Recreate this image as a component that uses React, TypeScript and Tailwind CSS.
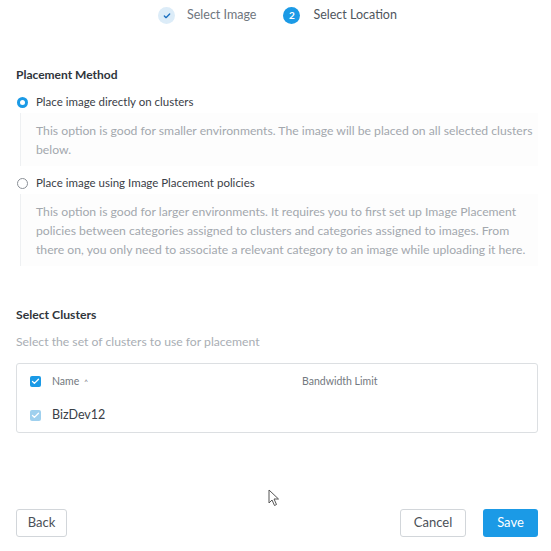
import { Check } from 'lucide-react';

function Radio({ checked }: { checked: boolean }) {
  return checked ? (
    <span className="w-[11px] h-[11px] rounded-full bg-[#1b9ae6] flex items-center justify-center shrink-0">
      <span className="w-[5px] h-[5px] rounded-full bg-white" />
    </span>
  ) : (
    <span className="w-[11px] h-[11px] rounded-full border border-[#8a8f96] bg-white shrink-0" />
  );
}

function Box({ faded }: { faded?: boolean }) {
  return (
    <span
      className={`w-[11px] h-[11px] rounded-[2px] flex items-center justify-center shrink-0 ${
        faded ? 'bg-[#9fd0ee]' : 'bg-[#1b9ae6]'
      }`}
    >
      <Check className="w-[9px] h-[9px] text-white" strokeWidth={3.5} />
    </span>
  );
}

export default function App() {
  return (
    <div className="w-[551px] h-[551px] bg-white text-[#333a42] flex flex-col relative" style={{ fontFamily: 'Lato, "Open Sans", sans-serif' }}>
      {/* stepper */}
      <div className="h-[31px] flex items-center pl-[158px] text-[12.5px]">
        <span className="w-[17px] h-[17px] rounded-full bg-[#dcecf8] flex items-center justify-center">
          <Check className="w-[8px] h-[8px] text-[#1b6fc0]" strokeWidth={4} />
        </span>
        <span className="ml-[12px] text-[#6f767e]">Select Image</span>
        <span className="ml-[27px] w-[17px] h-[17px] rounded-full bg-[#1b9ae6] text-white text-[10px] font-bold flex items-center justify-center">
          2
        </span>
        <span className="ml-[13px] text-[#4f565e]">Select Location</span>
      </div>

      <div className="pl-4 pr-[13px] pt-[36px]">
        <h2 className="text-[12px] font-bold text-[#2f353b] leading-[16px]">Placement Method</h2>

        <div className="mt-[11px] flex items-center gap-[8px] pl-[1px] h-[16px]">
          <Radio checked />
          <span className="text-[11.5px] text-[#3a4047]">Place image directly on clusters</span>
        </div>
        <div className="mt-[3px] ml-[4px] border-l border-[#eef0f2] bg-[#fdfdfd] pl-[15px] pt-[8px] pb-[7px] text-[12.2px] leading-[19px] text-[#a3a8ae]">
          This option is good for smaller environments. The image will be placed on all selected clusters below.
        </div>

        <div className="mt-[9px] flex items-center gap-[8px] pl-[1px] h-[16px]">
          <Radio checked={false} />
          <span className="text-[11.5px] text-[#3a4047]">Place image using Image Placement policies</span>
        </div>
        <div className="mt-[3px] ml-[4px] border-l border-[#eef0f2] bg-[#fdfdfd] pl-[15px] pt-[8px] pb-[7px] text-[12.2px] leading-[19px] text-[#a3a8ae]">
          This option is good for larger environments. It requires you to first set up Image Placement policies between categories assigned to clusters and categories assigned to images. From there on, you only need to associate a relevant category to an image while uploading it here.
        </div>

        <h2 className="mt-[41px] text-[12.2px] font-bold text-[#2f353b] leading-[16px]">Select Clusters</h2>
        <p className="mt-[11px] text-[12.2px] text-[#a9aeb4] leading-[16px]">Select the set of clusters to use for placement</p>

        <div className="mt-[13px] border border-[#dcdfe2] rounded-[3px]">
          <div className="h-[35px] flex items-center pl-[13px] text-[10.5px] text-[#737980]">
            <Box />
            <span className="ml-[11px]">Name</span>
            <span className="ml-[5px] text-[8px]">˄</span>
            <span className="ml-[214px]">Bandwidth Limit</span>
          </div>
          <div className="h-[33px] flex items-center pl-[13px] text-[12.5px] text-[#3a4047]">
            <Box faded />
            <span className="ml-[11px]">BizDev12</span>
          </div>
        </div>
      </div>

      <div className="mt-auto mb-[14px] pl-4 pr-[13px] flex items-center">
        <button className="h-[28px] w-[51px] border border-[#d2d6da] rounded-[3px] text-[13px] text-[#4a5057] bg-white">Back</button>
        <button className="ml-auto h-[28px] w-[66px] border border-[#d2d6da] rounded-[3px] text-[13px] text-[#4a5057] bg-white">Cancel</button>
        <button className="ml-[17px] h-[28px] w-[55px] rounded-[3px] text-[13px] text-white bg-[#1b9ae6]">Save</button>
      </div>

      <svg className="absolute left-[268px] top-[489px]" width="12" height="18" viewBox="0 0 12 18">
        <path d="M1 1 L1 14 L4 11 L6.5 16.5 L8.5 15.5 L6 10 L10.5 10 Z" fill="white" stroke="#555" strokeWidth="1" strokeLinejoin="round" />
      </svg>
    </div>
  );
}
